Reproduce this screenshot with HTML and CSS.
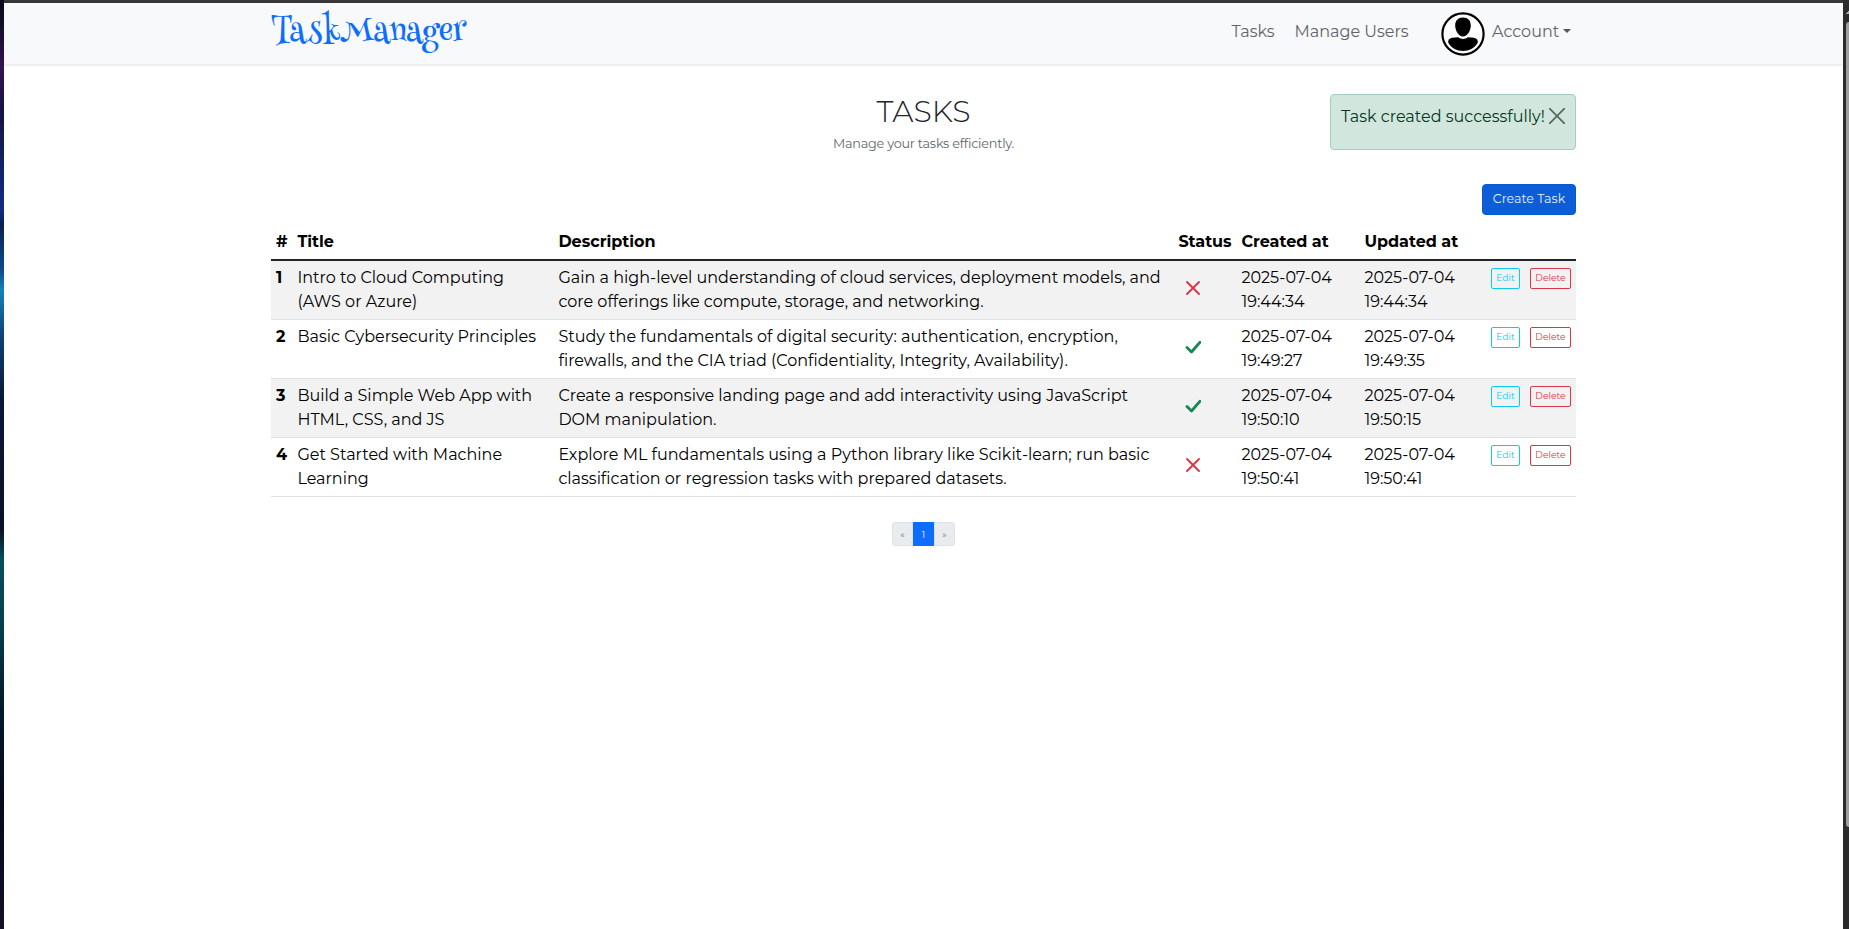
FILE: index.html
```html
<!DOCTYPE html>
<html lang="en">
<head>
<meta charset="utf-8">
<title>TaskManager</title>
<link rel="stylesheet" href="styles.css">
</head>
<body>
<div class="window">
  <div class="desktop-edge"></div>
  <div class="page">
    <header class="navbar">
      <div class="container nav-inner">
        <a class="brand">TaskManager</a>
        <nav class="nav-links">
          <a class="link-tasks">Tasks</a>
          <a class="link-users">Manage Users</a>
          <svg class="avatar" viewBox="0 0 44 44"><circle cx="22" cy="22" r="20.6" fill="#fff" stroke="#000" stroke-width="2.2"/><path d="M22 5.400c5 0 7.800 3 7.800 8 0 5-3.400 11-7.800 11s-7.800-6-7.800-11c0-5 2.800-8 7.800-8z"/><path d="M17.300 25.200c2.400 2.300 7 2.300 9.400 0l6.300.6c3 .6 4.400 2.600 3.600 5.200-3 5.200-8.600 8-14.600 8S10.400 36.200 7.400 31c-.8-2.600.6-4.600 3.600-5.200z"/></svg>
          <a class="account">Account</a><span class="caret"></span>
        </nav>
      </div>
    </header>
    <main class="container">
      <section class="heading">
        <div class="heading-text">
          <h1>TASKS</h1>
          <p>Manage your tasks efficiently.</p>
        </div>
        <div class="alert"><span>Task created successfully!</span><svg class="close" viewBox="0 0 16 16"><path d="M.7.7l14.600 14.600M15.300.7L.7 15.300" stroke="#000" stroke-width="1.800" stroke-linecap="round"/></svg></div>
      </section>
      <div class="toolbar"><button class="btn-create">Create Task</button></div>
      <table class="tasks">
        <colgroup><col class="c-num"><col class="c-title"><col class="c-desc"><col class="c-status"><col class="c-date"><col class="c-date2"><col></colgroup>
        <thead><tr><th>#</th><th>Title</th><th>Description</th><th>Status</th><th>Created at</th><th>Updated at</th><th></th></tr></thead>
        <tbody>
          <tr><th>1</th><td>Intro to Cloud Computing<br>(AWS or Azure)</td><td>Gain a high-level understanding of cloud services, deployment models, and<br>core offerings like compute, storage, and networking.</td><td><svg class="mark" viewBox="0 0 16 16"><path class="cross" d="M2 2l12 12M14 2L2 14"/></svg></td><td class="date">2025-07-04<br>19:44:34</td><td class="date">2025-07-04<br>19:44:34</td><td><div class="actions"><button class="edit">Edit</button><button class="delete">Delete</button></div></td></tr>
          <tr><th>2</th><td>Basic Cybersecurity Principles</td><td>Study the fundamentals of digital security: authentication, encryption,<br>firewalls, and the CIA triad (Confidentiality, Integrity, Availability).</td><td><svg class="mark" viewBox="0 0 16 16"><path class="check" d="M2 8.500l4.500 4.500L15 3.200"/></svg></td><td class="date">2025-07-04<br>19:49:27</td><td class="date">2025-07-04<br>19:49:35</td><td><div class="actions"><button class="edit">Edit</button><button class="delete">Delete</button></div></td></tr>
          <tr><th>3</th><td>Build a Simple Web App with<br>HTML, CSS, and JS</td><td>Create a responsive landing page and add interactivity using JavaScript<br>DOM manipulation.</td><td><svg class="mark" viewBox="0 0 16 16"><path class="check" d="M2 8.500l4.500 4.500L15 3.200"/></svg></td><td class="date">2025-07-04<br>19:50:10</td><td class="date">2025-07-04<br>19:50:15</td><td><div class="actions"><button class="edit">Edit</button><button class="delete">Delete</button></div></td></tr>
          <tr><th>4</th><td>Get Started with Machine<br>Learning</td><td>Explore ML fundamentals using a Python library like Scikit-learn; run basic<br>classification or regression tasks with prepared datasets.</td><td><svg class="mark" viewBox="0 0 16 16"><path class="cross" d="M2 2l12 12M14 2L2 14"/></svg></td><td class="date">2025-07-04<br>19:50:41</td><td class="date">2025-07-04<br>19:50:41</td><td><div class="actions"><button class="edit">Edit</button><button class="delete">Delete</button></div></td></tr>
        </tbody>
      </table>
      <div class="pagination"><span>«</span><span class="active">1</span><span>»</span></div>
    </main>
  </div>
  <div class="scrollbar"><i class="arrow"></i><div class="thumb"></div></div>
</div>
</body>
</html>
```

FILE: styles.css
```css
* { box-sizing: border-box; }
body { margin: 0; overflow: hidden; background: #fff; color: #212529; font: 400 16px/24px Montserrat, Inter, sans-serif; }
.window { display: grid; grid-template-columns: 4px 1fr 6px; height: 929px; }
.desktop-edge { background: linear-gradient(#080a1c 0, #14102c 25px, #35144e 65px, #151347 110px, #142b85 210px, #0a2056 225px, #0e4b8e 270px, #1583bd 290px, #0d437a 335px, #0a1738 400px, #0a1228 530px, #06505d 560px, #06414f 620px, #04192d 710px, #040a1c 800px, #111026 929px); }
.page { border-top: 3px solid #383739; min-width: 0; }
.container { width: 1305px; margin-left: 267px; }
.navbar { height: 61px; background: #f8f9fa; box-shadow: 0 1px 3px rgba(0,0,0,.12); }
.nav-inner { display: flex; justify-content: space-between; }
.brand { height: 61px; color: #0d6efd; font: 400 30px/62px "Henny Penny", "Liberation Serif", serif; }
.nav-links { display: flex; align-items: flex-start; padding-right: 5px; line-height: 24px; color: #626568; }
.nav-links a { padding-top: 17px; }
.link-tasks { width: 63px; }
.link-users { width: 146.500px; }
.avatar { width: 44px; height: 44px; margin-top: 9px; margin-right: 7px; }
.account { width: 71px; }
.caret { margin-top: 26px; border: 4.500px solid transparent; border-top-color: #555; border-bottom: 0; }
.heading { position: relative; height: 120px; padding-top: 28px; text-align: center; }
h1 { margin: 0; font-size: 30px; line-height: 40px; font-weight: 300; }
.heading p { margin: 0; font-size: 12.800px; line-height: 24px; color: #62686d; letter-spacing: -.23px; }
.alert { position: absolute; right: 0; top: 30px; width: 246px; height: 56px; padding: 10px; display: flex; justify-content: space-between; background: #d1e7dd; border: 1px solid #a3cfbb; border-radius: 4px; color: #0a3622; white-space: nowrap; }
.close { width: 16px; height: 16px; margin-top: 3px; opacity: .55; flex: none; }
.toolbar { display: flex; justify-content: flex-end; height: 42px; }
button { font: inherit; padding: 0; }
.btn-create { width: 94px; height: 31px; padding-bottom: 2px; background: #0b5ed7; border: 1px solid #0a58ca; border-radius: 4px; color: #e7effb; font-size: 12.600px; }
.tasks { width: 1305px; table-layout: fixed; border-collapse: separate; border-spacing: 0; color: #000; white-space: nowrap; }
.c-num { width: 22px; } .c-title { width: 261px; } .c-desc { width: 620px; } .c-status { width: 63px; } .c-date { width: 123px; } .c-date2 { width: 123px; }
.tasks th, .tasks td { text-align: left; vertical-align: top; padding: 4px 4px 4px 4.400px; }
.tasks th:first-child { padding-left: 5px; }
.tasks thead th { height: 35px; border-bottom: 2px solid #212529; }
.tasks tbody td, .tasks tbody th { height: 59px; padding-top: 5px; border-bottom: 1px solid #dee2e6; }
.tasks tbody tr:nth-child(odd) { background: #f2f2f2; }
.mark { display: block; width: 16px; height: 16px; margin: 14px 0 0 6.600px; fill: none; }
.cross { stroke: #dc3545; stroke-width: 1.900; stroke-linecap: round; }
.check { stroke: #198754; stroke-width: 2.800; stroke-linecap: round; stroke-linejoin: round; }
.actions { display: flex; justify-content: flex-end; gap: 10px; padding: 2px 1px 0 0; }
.edit, .delete { height: 21px; padding-bottom: 2px; border: 1px solid #0dcaf0; border-radius: 2px; background: transparent; color: #0dcaf0; font-size: 9.200px; line-height: 17px; }
.edit { width: 29px; }
.delete { width: 41px; border-color: #dc3545; color: #dc3545; }
.pagination { display: flex; justify-content: center; margin-top: 25px; font-size: 9.200px; }
.pagination span { width: 21px; height: 24px; line-height: 23px; text-align: center; background: #e9ecef; border: 1px solid #dee2e6; color: #6c757d; }
.pagination span:first-child { border-radius: 3px 0 0 3px; }
.pagination span:last-child { border-radius: 0 3px 3px 0; }
.pagination .active { background: #0d6efd; border-color: #0d6efd; color: #fff; }
.scrollbar { background: #2b2b2b; display: flex; flex-direction: column; align-items: flex-end; }
.arrow { width: 3px; height: 3px; margin-top: 11px; background: linear-gradient(135deg, transparent 50%, #aaa 50%); }
.thumb { width: 3px; height: 805px; margin-top: 8px; background: #9f9f9f; border-radius: 3px 0 0 3px; }
```
